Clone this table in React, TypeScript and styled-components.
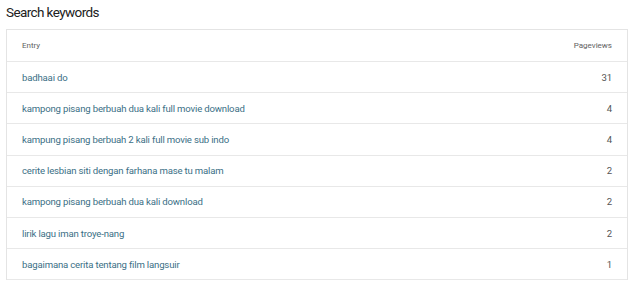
import React from 'react';
import styled, { createGlobalStyle } from 'styled-components';

const GlobalStyle = createGlobalStyle`
  body {
    margin: 0;
    background: #ffffff;
    font-family: Roboto, "Liberation Sans", Arial, sans-serif;
  }
`;

const Page = styled.div`
  padding: 0 12px 0 6px;
`;

const Title = styled.h2`
  margin: 0;
  padding-top: 4px;
  height: 25px;
  font-size: 13.5px;
  letter-spacing: -0.6px;
  font-weight: 400;
  line-height: 17px;
  color: #212121;
`;

const Table = styled.div`
  border: 1px solid #e4e4e4;
  border-bottom: none;
`;

const Row = styled.div<{ $header?: boolean }>`
  display: flex;
  align-items: center;
  justify-content: space-between;
  height: ${p => (p.$header ? '31px' : '30.2px')};
  padding: 0 15px;
  border-bottom: 1px solid #e8e8e8;
  font-size: ${p => (p.$header ? '8px' : '9.6px')};
  letter-spacing: ${p => (p.$header ? '0' : '-0.18px')};
  color: ${p => (p.$header ? '#616161' : '#3b6f86')};
`;

const Count = styled.span`
  color: #555555;
`;

const keywords: [string, number][] = [
  ['badhaai do', 31],
  ['kampong pisang berbuah dua kali full movie download', 4],
  ['kampung pisang berbuah 2 kali full movie sub indo', 4],
  ['cerite lesbian siti dengan farhana mase tu malam', 2],
  ['kampong pisang berbuah dua kali download', 2],
  ['lirik lagu iman troye-nang', 2],
  ['bagaimana cerita tentang film langsuir', 1],
];

const App: React.FC = () => (
  <>
    <GlobalStyle />
    <Page>
      <Title>Search keywords</Title>
      <Table>
        <Row $header>
          <span>Entry</span>
          <span>Pageviews</span>
        </Row>
        {keywords.map(([entry, views]) => (
          <Row key={entry}>
            <span>{entry}</span>
            <Count>{views}</Count>
          </Row>
        ))}
      </Table>
    </Page>
  </>
);

export default App;
